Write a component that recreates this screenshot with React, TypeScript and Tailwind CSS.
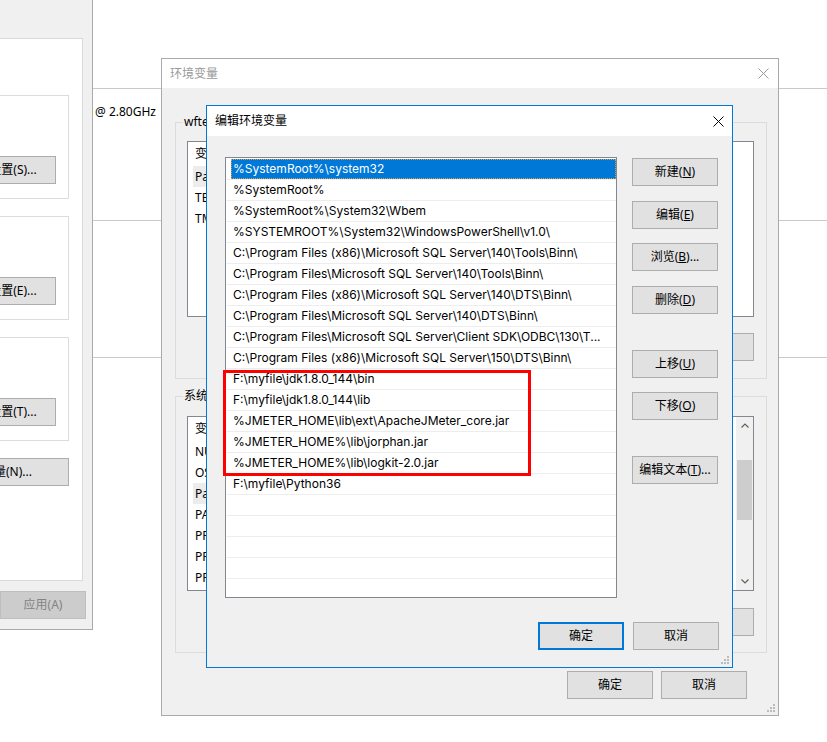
import React from 'react';

const pathRows = [
  '%SystemRoot%\\system32',
  '%SystemRoot%',
  '%SystemRoot%\\System32\\Wbem',
  '%SYSTEMROOT%\\System32\\WindowsPowerShell\\v1.0\\',
  'C:\\Program Files (x86)\\Microsoft SQL Server\\140\\Tools\\Binn\\',
  'C:\\Program Files\\Microsoft SQL Server\\140\\Tools\\Binn\\',
  'C:\\Program Files (x86)\\Microsoft SQL Server\\140\\DTS\\Binn\\',
  'C:\\Program Files\\Microsoft SQL Server\\140\\DTS\\Binn\\',
  'C:\\Program Files\\Microsoft SQL Server\\Client SDK\\ODBC\\130\\T...',
  'C:\\Program Files (x86)\\Microsoft SQL Server\\150\\DTS\\Binn\\',
  'F:\\myfile\\jdk1.8.0_144\\bin',
  'F:\\myfile\\jdk1.8.0_144\\lib',
  '%JMETER_HOME\\lib\\ext\\ApacheJMeter_core.jar',
  '%JMETER_HOME%\\lib\\jorphan.jar',
  '%JMETER_HOME%\\lib\\logkit-2.0.jar',
  'F:\\myfile\\Python36',
  '',
  '',
  '',
  '',
  '',
];

const userVars = ['Path', 'TEMP', 'TMP'];
const sysVars = [
  'NUMBER_OF_PROCESSORS',
  'OS',
  'Path',
  'PATHEXT',
  'PROCESSOR_ARCHITECTURE',
  'PROCESSOR_IDENTIFIER',
  'PROCESSOR_LEVEL',
];

function Btn({
  children,
  className = '',
  focus = false,
  disabled = false,
}: {
  children: React.ReactNode;
  className?: string;
  focus?: boolean;
  disabled?: boolean;
}) {
  let look = 'border border-[#adadad] bg-[#e1e1e1] text-black';
  if (focus) look = 'border-2 border-[#0078d7] bg-[#e1e1e1] text-black';
  if (disabled) look = 'border border-[#bfbfbf] bg-[#cccccc] text-[#838383]';
  return (
    <div
      className={`h-[28px] w-[86px] shrink-0 flex items-center justify-center whitespace-nowrap ${look} ${className}`}
    >
      {children}
    </div>
  );
}

function CloseX({ className = '' }: { className?: string }) {
  return (
    <svg width="11" height="11" viewBox="0 0 11 11" className={className}>
      <path d="M0.5 0.5L10.5 10.5M10.5 0.5L0.5 10.5" stroke="currentColor" strokeWidth="1" fill="none" />
    </svg>
  );
}

function Grip({ className = '' }: { className?: string }) {
  return (
    <svg width="8" height="8" viewBox="0 0 8 8" className={className}>
      <rect x="6" y="0" width="2" height="2" fill="#bcbcbc" />
      <rect x="3" y="3" width="2" height="2" fill="#bcbcbc" />
      <rect x="6" y="3" width="2" height="2" fill="#bcbcbc" />
      <rect x="0" y="6" width="2" height="2" fill="#bcbcbc" />
      <rect x="3" y="6" width="2" height="2" fill="#bcbcbc" />
      <rect x="6" y="6" width="2" height="2" fill="#bcbcbc" />
    </svg>
  );
}

function Chevron({ up }: { up: boolean }) {
  return (
    <svg width="8" height="5" viewBox="0 0 8 5">
      <path
        d={up ? 'M0.5 4.5L4 1L7.5 4.5' : 'M0.5 0.5L4 4L7.5 0.5'}
        stroke="#606060"
        strokeWidth="1.2"
        fill="none"
      />
    </svg>
  );
}

function Group({
  label,
  className = '',
  children,
}: {
  label: string;
  className?: string;
  children: React.ReactNode;
}) {
  return (
    <div className={`relative border border-[#dcdcdc] ${className}`}>
      <span className="absolute -top-[9px] left-[7px] bg-[#f0f0f0] px-[1px] whitespace-nowrap">
        {label}
      </span>
      {children}
    </div>
  );
}

function VarList({ items, scroll }: { items: string[]; scroll?: boolean }) {
  return (
    <div className="flex h-full border border-[#828790] bg-white overflow-hidden">
      <div className="flex-1 flex flex-col">
        <div className="h-[24px] flex items-center pl-[7px] whitespace-nowrap">
          <span className="w-[160px]">变量</span>
          <span>值</span>
        </div>
        {items.map((v) => (
          <div key={v + items.length} className="h-[21px] ml-[5px] flex items-center">
            <div
              className={`h-full w-[530px] flex items-center pl-[2px] whitespace-nowrap ${
                v === 'Path' ? 'bg-[#ececec]' : ''
              }`}
            >
              {v}
            </div>
          </div>
        ))}
      </div>
      {scroll && (
        <div className="w-[17px] bg-[#f0f0f0] flex flex-col">
          <div className="h-[17px] flex items-center justify-center">
            <Chevron up />
          </div>
          <div className="mt-[26px] h-[60px] w-[15px] mx-auto bg-[#cdcdcd]" />
          <div className="flex-1" />
          <div className="h-[17px] flex items-center justify-center">
            <Chevron up={false} />
          </div>
        </div>
      )}
    </div>
  );
}

export default function App() {
  return (
    <div className="relative w-[827px] h-[742px] overflow-hidden bg-white text-[12px] leading-[16px] text-black font-['Noto_Sans','Noto_Sans_CJK_SC',sans-serif]">
      {/* control panel behind everything */}
      <div className="absolute left-[93px] top-0 w-[734px] flex flex-col pt-[88px]">
        <div className="h-[132px] border-t border-[#c9c9c9] pl-[2px] pt-[15px]">@ 2.80GHz</div>
        <div className="h-[137px] border-t border-[#c9c9c9]" />
        <div className="border-t border-[#c9c9c9]" />
      </div>

      {/* system properties window, mostly off screen */}
      <div className="absolute left-[-250px] top-0 w-[343px] h-[630px] bg-[#f0f0f0] border-r border-b border-[#aaaaaa] flex flex-col pt-[38px]">
        <div className="ml-[6px] mr-[9px] h-[543px] bg-white border border-[#d9d9d9] flex flex-col items-end pr-[13px] pt-[56px]">
          {[
            ['性能', '设置(S)...'],
            ['用户配置文件', '设置(E)...'],
            ['启动和故障恢复', '设置(T)...'],
          ].map(([name, btn], i) => (
            <div
              key={name}
              className={`w-[300px] h-[104px] border border-[#dcdcdc] flex flex-col items-end justify-end pb-[14px] pr-[12px] ${
                i > 0 ? 'mt-[17px]' : ''
              }`}
            >
              <Btn className="w-[84px]">{btn}</Btn>
            </div>
          ))}
          <Btn className="mt-[17px] w-[148px]">环境变量(N)...</Btn>
        </div>
        <div className="mt-[10px] flex justify-end gap-[8px] pr-[6px]">
          <Btn>确定</Btn>
          <Btn>取消</Btn>
          <Btn disabled>应用(A)</Btn>
        </div>
      </div>

      {/* 环境变量 window */}
      <div className="absolute left-[161px] top-[58px] w-[618px] h-[658px] border border-[#aaaaaa] bg-[#f0f0f0] flex flex-col">
        <div className="h-[29px] bg-white flex items-center justify-between pl-[8px] pr-[9px] text-[#999999]">
          <span>环境变量</span>
          <CloseX />
        </div>
        <div className="flex-1 flex flex-col pl-[13px] pr-[11px] pt-[34px]">
          <Group label="wftest 的用户变量(U)" className="h-[257px] pl-[11px] pr-[12px] pt-[18px]">
            <div className="h-[176px]">
              <VarList items={userVars} />
            </div>
            <div className="mt-[16px] flex justify-end gap-[10px]">
              <Btn className="w-[75px]">新建(N)...</Btn>
              <Btn className="w-[75px]">编辑(E)...</Btn>
              <Btn className="w-[75px]">删除(D)</Btn>
            </div>
          </Group>
          <Group label="系统变量(S)" className="mt-[17px] h-[257px] pl-[11px] pr-[12px] pt-[19px]">
            <div className="h-[175px]">
              <VarList items={sysVars} scroll />
            </div>
            <div className="mt-[17px] flex justify-end gap-[10px]">
              <Btn className="w-[75px]">新建(W)...</Btn>
              <Btn className="w-[75px]">编辑(I)...</Btn>
              <Btn className="w-[75px]">删除(L)</Btn>
            </div>
          </Group>
          <div className="mt-[18px] mr-[20px] flex justify-end gap-[8px]">
            <Btn>确定</Btn>
            <Btn>取消</Btn>
          </div>
        </div>
        <Grip className="absolute right-[3px] bottom-[3px]" />
      </div>

      {/* 编辑环境变量 dialog */}
      <div className="absolute left-[206px] top-[105px] w-[527px] h-[563px] border border-[#0078d7] bg-[#f0f0f0] flex flex-col">
        <div className="h-[30px] bg-white flex items-center justify-between pl-[8px] pr-[8px]">
          <span>编辑环境变量</span>
          <CloseX />
        </div>
        <div className="flex-1 flex flex-col pl-[18px] pr-[13px] pt-[21px]">
          <div className="flex">
            <div className="w-[392px] h-[441px] border border-[#828790] bg-white pt-[1px] overflow-hidden font-['Inter','Noto_Sans_CJK_SC',sans-serif]">
              {pathRows.map((p, i) => (
                <div key={i} className="h-[21px] ml-[1px] border-b border-[#ededed] flex">
                  <div
                    className={`flex-1 ml-[4px] pl-[2px] leading-[20px] whitespace-nowrap ${
                      i === 0
                        ? 'bg-[#0078d7] text-white outline-1 outline-dotted outline-[#d9a04a] -outline-offset-1'
                        : ''
                    }`}
                  >
                    {p}
                  </div>
                </div>
              ))}
            </div>
            <div className="ml-[15px] flex flex-col">
              <Btn className="mt-[1px]">
                新建(<u>N</u>)
              </Btn>
              <Btn className="mt-[15px]">
                编辑(<u>E</u>)
              </Btn>
              <Btn className="mt-[14px]">
                浏览(<u>B</u>)...
              </Btn>
              <Btn className="mt-[15px]">
                删除(<u>D</u>)
              </Btn>
              <Btn className="mt-[36px]">
                上移(<u>U</u>)
              </Btn>
              <Btn className="mt-[14px]">
                下移(<u>O</u>)
              </Btn>
              <Btn className="mt-[36px]">
                编辑文本(<u>T</u>)...
              </Btn>
            </div>
          </div>
          <div className="mt-[24px] flex justify-end gap-[9px]">
            <Btn focus>确定</Btn>
            <Btn>取消</Btn>
          </div>
        </div>
        <Grip className="absolute right-[3px] bottom-[3px]" />
      </div>

      {/* red annotation box */}
      <div className="absolute left-[223px] top-[370px] w-[308px] h-[106px] border-[3px] border-[#ff0000]" />
    </div>
  );
}
